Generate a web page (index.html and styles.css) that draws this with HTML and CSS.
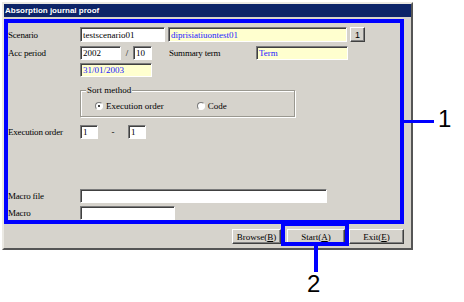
FILE: index.html
```html
<!DOCTYPE html>
<html lang="en">
<head>
  <meta charset="UTF-8">
  <title>Absorption journal proof</title>
  <link rel="stylesheet" href="styles.css">
</head>
<body>
  <div id="window">
    <div id="titlebar">Absorption journal proof</div>
    <div id="form">
      <div class="row row-scenario">
        <span class="label">Scenario</span>
        <input class="field w85" value="testscenario01" readonly>
        <input class="field info w179" value="diprisiatiuontest01" readonly>
        <button class="small-btn">1</button>
      </div>
      <div class="row row-period">
        <span class="label">Acc period</span>
        <input class="field w41" value="2002" readonly>
        <span class="slash">/</span>
        <input class="field w19" value="10" readonly>
        <span class="label summary">Summary term</span>
        <input class="field info w92" value="Term" readonly>
      </div>
      <div class="row row-date">
        <span class="label"></span>
        <input class="field info w72" value="31/01/2003" readonly>
      </div>
      <div class="group">
        <span class="group-title">Sort method</span>
        <label class="radio"><span class="dot checked"></span>Execution order</label>
        <label class="radio code"><span class="dot"></span>Code</label>
      </div>
      <div class="row row-exec">
        <span class="label">Execution order</span>
        <input class="field w18" value="1" readonly>
        <span class="dash">-</span>
        <input class="field w18" value="1" readonly>
      </div>
      <div class="row row-macrofile">
        <span class="label">Macro file</span>
        <input class="field w247" value="" readonly>
      </div>
      <div class="row row-macro">
        <span class="label">Macro</span>
        <input class="field w95" value="" readonly>
      </div>
    </div>
    <div id="actions">
      <button class="btn browse">Browse(<u>B</u>)</button>
      <button class="btn start">Start(<u>A</u>)</button>
      <button class="btn exit">Exit(<u>E</u>)</button>
    </div>
  </div>

  <div class="mark mark-form"></div>
  <div class="mark mark-start"></div>
  <div class="lead lead-1"></div>
  <div class="lead lead-2"></div>
  <span class="callout callout-1">1</span>
  <span class="callout callout-2">2</span>
</body>
</html>
```
FILE: styles.css
```css
html, body {
  margin: 0;
  padding: 0;
  width: 464px;
  height: 302px;
  background: #fff;
  position: relative;
  overflow: hidden;
  font-family: "Liberation Serif", serif;
  font-size: 9px;
  color: #000;
}
#window {
  margin: 2px 0 0 2px;
  width: 411px;
  height: 248px;
  box-sizing: border-box;
  background: #d6d3cc;
  border: 2px solid;
  border-color: #ebe9e3 #555 #555 #ebe9e3;
  display: flex;
  flex-direction: column;
}
#titlebar {
  height: 13px;
  line-height: 13px;
  background: #0c2468;
  color: #fff;
  font-family: "Liberation Sans", sans-serif;
  font-weight: bold;
  font-size: 8px;
  padding-left: 1px;
}
#form {
  padding: 10px 0 0 4px;
  display: flex;
  flex-direction: column;
}
.row {
  display: flex;
  align-items: center;
  height: 15px;
}
.label {
  width: 72px;
  flex: 0 0 72px;
  letter-spacing: -0.2px;
}
.field {
  box-sizing: border-box;
  height: 15px;
  margin: 0;
  padding: 0 2px;
  border: 1px solid;
  border-color: #7a7a7a #fff #fff #7a7a7a;
  box-shadow: inset 1px 1px 0 #404040;
  background: #fff;
  font-family: "Liberation Serif", serif;
  font-size: 9px;
  color: #000;
  outline: none;
}
.field.info {
  background: #ffffcf;
  color: #1a1aff;
}
.w18 { width: 18px; }
.w19 { width: 19px; }
.w41 { width: 41px; }
.w72 { width: 72px; }
.w85 { width: 85px; }
.w92 { width: 92px; }
.w95 { width: 95px; }
.w179 { width: 179px; }
.w247 { width: 247px; }
.row-scenario .info { margin-left: 3px; }
.small-btn {
  box-sizing: border-box;
  margin-left: 3px;
  width: 15px;
  height: 15px;
  padding: 0;
  background: #d6d3cc;
  border: 1px solid;
  border-color: #fff #404040 #404040 #fff;
  box-shadow: inset -1px -1px 0 #808080;
  font-family: "Liberation Sans", sans-serif;
  font-size: 9px;
}
.row-period {
  margin-top: 4px;
  height: 14px;
}
.row-period .field { height: 14px; }
.slash {
  width: 12px;
  text-align: center;
}
.summary {
  margin-left: 17px;
  width: 87px;
  flex-basis: 87px;
}
.row-date {
  margin-top: 3px;
  height: 14px;
}
.row-date .field { height: 14px; }
.group {
  position: relative;
  margin: 13px 0 0 72px;
  width: 215px;
  height: 27px;
  box-sizing: border-box;
  border: 1px solid #9a9890;
  box-shadow: inset 1px 1px 0 #fff, 1px 1px 0 #fff;
  display: flex;
  align-items: center;
  padding: 4px 0 0 14px;
}
.group-title {
  position: absolute;
  top: -6px;
  left: 5px;
  padding: 0 1px;
  background: #d6d3cc;
  line-height: 11px;
}
.radio {
  display: flex;
  align-items: center;
  gap: 3px;
}
.radio.code { margin-left: 33px; }
.dot {
  width: 8px;
  height: 8px;
  box-sizing: border-box;
  border-radius: 50%;
  border: 1px solid;
  border-color: #7a7a7a #fff #fff #7a7a7a;
  background: #fff;
  display: flex;
  align-items: center;
  justify-content: center;
}
.dot.checked::after {
  content: "";
  width: 2px;
  height: 2px;
  border-radius: 50%;
  background: #000;
}
.row-exec {
  margin-top: 8px;
  height: 14px;
}
.row-exec .field { height: 14px; }
.dash {
  width: 30px;
  text-align: center;
}
.row-macrofile {
  margin-top: 50px;
  height: 14px;
}
.row-macrofile .field { height: 14px; }
.row-macro {
  margin-top: 3px;
  height: 14px;
}
.row-macro .field { height: 14px; }
#actions {
  display: flex;
  justify-content: flex-end;
  padding: 9px 7px 0 0;
}
.btn {
  box-sizing: border-box;
  height: 15px;
  padding: 0;
  background: #d6d3cc;
  border: 1px solid;
  border-color: #fff #404040 #404040 #fff;
  box-shadow: inset -1px -1px 0 #808080;
  font-family: "Liberation Serif", serif;
  font-size: 9px;
  color: #000;
}
.browse { width: 49px; }
.start { width: 58px; margin-left: 6px; }
.exit { width: 55px; margin-left: 4px; }

/* annotation overlay */
.mark {
  position: absolute;
  border: 4px solid #0000ff;
  box-sizing: border-box;
}
.mark-form {
  left: 4px;
  top: 19px;
  width: 400px;
  height: 205px;
}
.mark-start {
  left: 281px;
  top: 222px;
  width: 68px;
  height: 24px;
}
.lead {
  position: absolute;
  background: #0000ff;
}
.lead-1 {
  left: 404px;
  top: 120px;
  width: 30px;
  height: 3px;
}
.lead-2 {
  left: 314px;
  top: 245px;
  width: 4px;
  height: 27px;
}
.callout {
  position: absolute;
  font-family: "Liberation Sans", sans-serif;
  font-size: 24px;
  line-height: 24px;
  color: #000;
}
.callout-1 {
  left: 438px;
  top: 107px;
}
.callout-2 {
  left: 307px;
  top: 272px;
}
```
